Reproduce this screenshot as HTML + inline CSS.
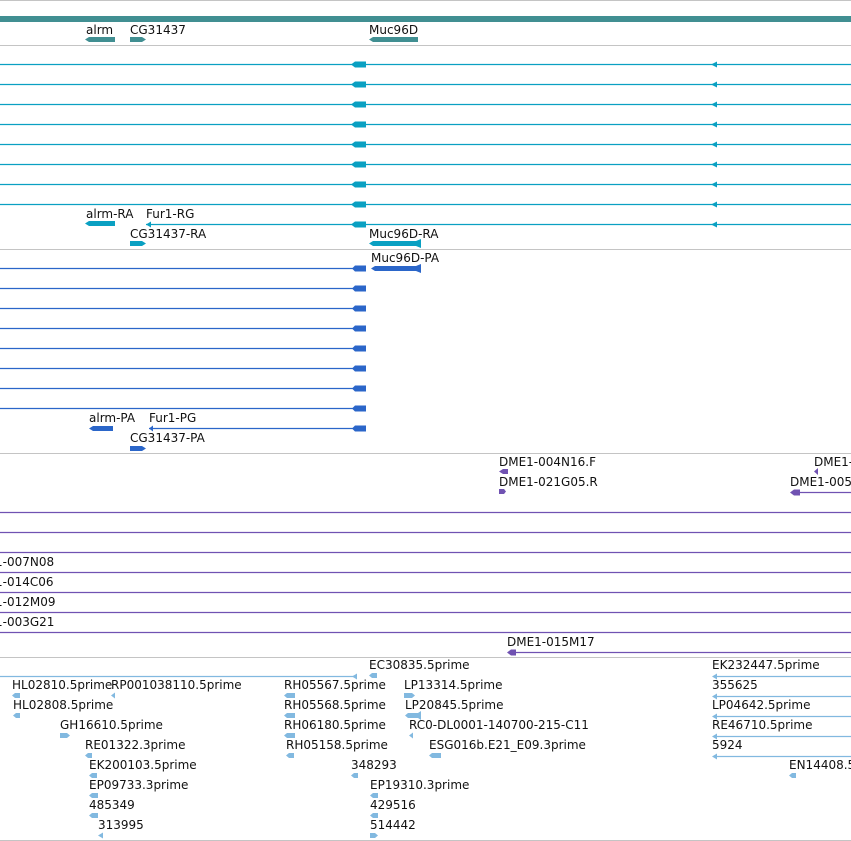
<!DOCTYPE html>
<html><head><meta charset="utf-8"><style>
html,body{margin:0;padding:0;background:#fff;width:851px;height:841px;overflow:hidden}
svg text{font-family:"DejaVu Sans","Liberation Sans",sans-serif;font-size:12px;fill:#111}
</style></head><body>
<svg width="851" height="841" xmlns="http://www.w3.org/2000/svg">
<g stroke="#c4c4c4" stroke-width="1">
<line x1="0" y1="0.5" x2="851" y2="0.5"/>
<line x1="0" y1="45.5" x2="851" y2="45.5"/>
<line x1="0" y1="249.5" x2="851" y2="249.5"/>
<line x1="0" y1="453.5" x2="851" y2="453.5"/>
<line x1="0" y1="657.5" x2="851" y2="657.5"/>
<line x1="0" y1="840.5" x2="851" y2="840.5"/>
</g>
<rect x="0" y="16" width="851" height="6" fill="#418f92"/>
<g fill="#418f92">
<polygon points="85,39.5 89,37 115,37 115,42 89,42"/>
<polygon points="130,37 142,37 146,39.5 142,42 130,42"/>
<polygon points="369,39.5 373,37 418,37 418,42 373,42"/>
</g>
<text x="86" y="34">alrm</text><text x="130" y="34">CG31437</text><text x="369" y="34">Muc96D</text>
<g stroke="#0aa0c2" stroke-width="1.2">
<line x1="0" y1="64.5" x2="851" y2="64.5"/><line x1="0" y1="84.5" x2="851" y2="84.5"/>
<line x1="0" y1="104.5" x2="851" y2="104.5"/><line x1="0" y1="124.5" x2="851" y2="124.5"/>
<line x1="0" y1="144.5" x2="851" y2="144.5"/><line x1="0" y1="164.5" x2="851" y2="164.5"/>
<line x1="0" y1="184.5" x2="851" y2="184.5"/><line x1="0" y1="204.5" x2="851" y2="204.5"/>
<line x1="146" y1="224.5" x2="851" y2="224.5"/>
</g>
<g fill="#0aa0c2">
<path d="M351 64.5l4-3h11v6h-11z M351 84.5l4-3h11v6h-11z M351 104.5l4-3h11v6h-11z M351 124.5l4-3h11v6h-11z M351 144.5l4-3h11v6h-11z M351 164.5l4-3h11v6h-11z M351 184.5l4-3h11v6h-11z M351 204.5l4-3h11v6h-11z M351 224.5l4-3h11v6h-11z"/>
<path d="M711 64.5l6-3v6z M711 84.5l6-3v6z M711 104.5l6-3v6z M711 124.5l6-3v6z M711 144.5l6-3v6z M711 164.5l6-3v6z M711 184.5l6-3v6z M711 204.5l6-3v6z M711 224.5l6-3v6z"/>
<path d="M146 224.5l5-3v6z"/>
<polygon points="85,223.5 89,221 115,221 115,226 89,226"/>
<polygon points="130,241 142,241 146,243.5 142,246 130,246"/>
<polygon points="369,243.5 373,241 416,241 421,239 421,248 416,246 373,246"/>
</g>
<text x="86" y="218">alrm-RA</text><text x="146" y="218">Fur1-RG</text>
<text x="130" y="238">CG31437-RA</text><text x="369" y="238">Muc96D-RA</text>
<g stroke="#2b66c9" stroke-width="1.2">
<line x1="0" y1="268.5" x2="360" y2="268.5"/><line x1="0" y1="288.5" x2="360" y2="288.5"/>
<line x1="0" y1="308.5" x2="360" y2="308.5"/><line x1="0" y1="328.5" x2="360" y2="328.5"/>
<line x1="0" y1="348.5" x2="360" y2="348.5"/><line x1="0" y1="368.5" x2="360" y2="368.5"/>
<line x1="0" y1="388.5" x2="360" y2="388.5"/><line x1="0" y1="408.5" x2="360" y2="408.5"/>
<line x1="149" y1="428.5" x2="360" y2="428.5"/>
</g>
<g fill="#2b66c9">
<path d="M352 268.5l3-3h11v6h-11z M352 288.5l3-3h11v6h-11z M352 308.5l3-3h11v6h-11z M352 328.5l3-3h11v6h-11z M352 348.5l3-3h11v6h-11z M352 368.5l3-3h11v6h-11z M352 388.5l3-3h11v6h-11z M352 408.5l3-3h11v6h-11z M352 428.5l3-3h11v6h-11z"/>
<path d="M149 428.5l4-3v6z"/>
<polygon points="371,268.5 375,266 416,266 421,264 421,273 416,271 375,271"/>
<polygon points="89,428.5 93,426 113,426 113,431 93,431"/>
<polygon points="130,446 142,446 146,448.5 142,451 130,451"/>
</g>
<text x="371" y="262">Muc96D-PA</text><text x="89" y="422">alrm-PA</text><text x="149" y="422">Fur1-PG</text>
<text x="130" y="442">CG31437-PA</text>
<g stroke="#7052b2" stroke-width="1.2">
<line x1="795" y1="492.5" x2="851" y2="492.5"/>
<line x1="0" y1="512.5" x2="851" y2="512.5"/><line x1="0" y1="532.5" x2="851" y2="532.5"/>
<line x1="0" y1="552.5" x2="851" y2="552.5"/><line x1="0" y1="572.5" x2="851" y2="572.5"/>
<line x1="0" y1="592.5" x2="851" y2="592.5"/><line x1="0" y1="612.5" x2="851" y2="612.5"/>
<line x1="0" y1="632.5" x2="851" y2="632.5"/><line x1="512" y1="652.5" x2="851" y2="652.5"/>
</g>
<g fill="#7052b2">
<polygon points="499,471.5 503,469 508,469 508,474 503,474"/>
<polygon points="499,489 504,489 506,491.5 504,494 499,494"/>
<polygon points="814,471.5 818,468 818,475"/>
<polygon points="790,492.5 794,489.5 800,489.5 800,495.5 794,495.5"/>
<polygon points="507,652.5 511,649.5 516,649.5 516,655.5 511,655.5"/>
</g>
<text x="499" y="466">DME1-004N16.F</text><text x="499" y="486">DME1-021G05.R</text>
<text x="814" y="466">DME1-</text><text x="790" y="486">DME1-005</text>
<text x="-5" y="566">1-007N08</text><text x="-5" y="586">1-014C06</text>
<text x="-5" y="606">1-012M09</text><text x="-5" y="626">1-003G21</text>
<text x="507" y="646">DME1-015M17</text>
<g stroke="#82b9e0" stroke-width="1.2">
<line x1="0" y1="676.5" x2="355" y2="676.5"/>
<line x1="714" y1="676.5" x2="851" y2="676.5"/><line x1="714" y1="696.5" x2="851" y2="696.5"/>
<line x1="714" y1="716.5" x2="851" y2="716.5"/><line x1="714" y1="736.5" x2="851" y2="736.5"/>
<line x1="714" y1="756.5" x2="851" y2="756.5"/>
</g>
<g fill="#82b9e0">
<path d="M352 676.5l5-3v6z"/>
<path d="M712 676.5l5-3v6z M712 696.5l5-3v6z M712 716.5l5-3v6z M712 736.5l5-3v6z M712 756.5l5-3v6z"/>
<path d="M369 675.5l3-2.5h5v5h-5z"/>
<path d="M12 695.5l3-2.5h5v5h-5z M111 695.5l4-3v6z M13 715.5l3-2.5h4v5h-4z"/>
<path d="M60 733h7l3 2.5-3 2.5h-7z"/>
<path d="M85 755.5l3-2.5h4v5h-4z M89 775.5l3-2.5h5v5h-5z M89 795.5l3-2.5h6v5h-6z M89 815.5l3-2.5h6v5h-6z M98 835.5l5-3v6z"/>
<path d="M284 695.5l3-2.5h8v5h-8z M284 715.5l3-2.5h8v5h-8z M284 735.5l3-2.5h8v5h-8z M286 755.5l3-2.5h5v5h-5z"/>
<path d="M351 775.5l3-2.5h4v5h-4z"/>
<path d="M370 795.5l3-2.5h5v5h-5z M370 815.5l3-2.5h5v5h-5z M370 833h5l3 2.5-3 2.5h-5z"/>
<path d="M404 693h8l3 2.5-3 2.5h-8z"/>
<path d="M405 715.5l3-2.5h10l3-2v9l-3-2h-10z"/>
<path d="M409 735.5l4-3v6z M429 755.5l3-2.5h9v5h-9z"/>
<path d="M789 775.5l3-2.5h4v5h-4z"/>
</g>
<text x="369" y="669">EC30835.5prime</text>
<text x="12" y="689">HL02810.5prime</text><text x="111" y="689">RP001038110.5prime</text>
<text x="13" y="709">HL02808.5prime</text><text x="60" y="729">GH16610.5prime</text>
<text x="85" y="749">RE01322.3prime</text><text x="89" y="769">EK200103.5prime</text>
<text x="89" y="789">EP09733.3prime</text><text x="89" y="809">485349</text><text x="98" y="829">313995</text>
<text x="284" y="689">RH05567.5prime</text><text x="284" y="709">RH05568.5prime</text>
<text x="284" y="729">RH06180.5prime</text><text x="286" y="749">RH05158.5prime</text>
<text x="351" y="769">348293</text><text x="370" y="789">EP19310.3prime</text>
<text x="370" y="809">429516</text><text x="370" y="829">514442</text>
<text x="404" y="689">LP13314.5prime</text><text x="405" y="709">LP20845.5prime</text>
<text x="409" y="729">RC0-DL0001-140700-215-C11</text><text x="429" y="749">ESG016b.E21_E09.3prime</text>
<text x="712" y="669">EK232447.5prime</text><text x="712" y="689">355625</text>
<text x="712" y="709">LP04642.5prime</text><text x="712" y="729">RE46710.5prime</text>
<text x="712" y="749">5924</text><text x="789" y="769">EN14408.5prime</text>
</svg>
</body></html>
